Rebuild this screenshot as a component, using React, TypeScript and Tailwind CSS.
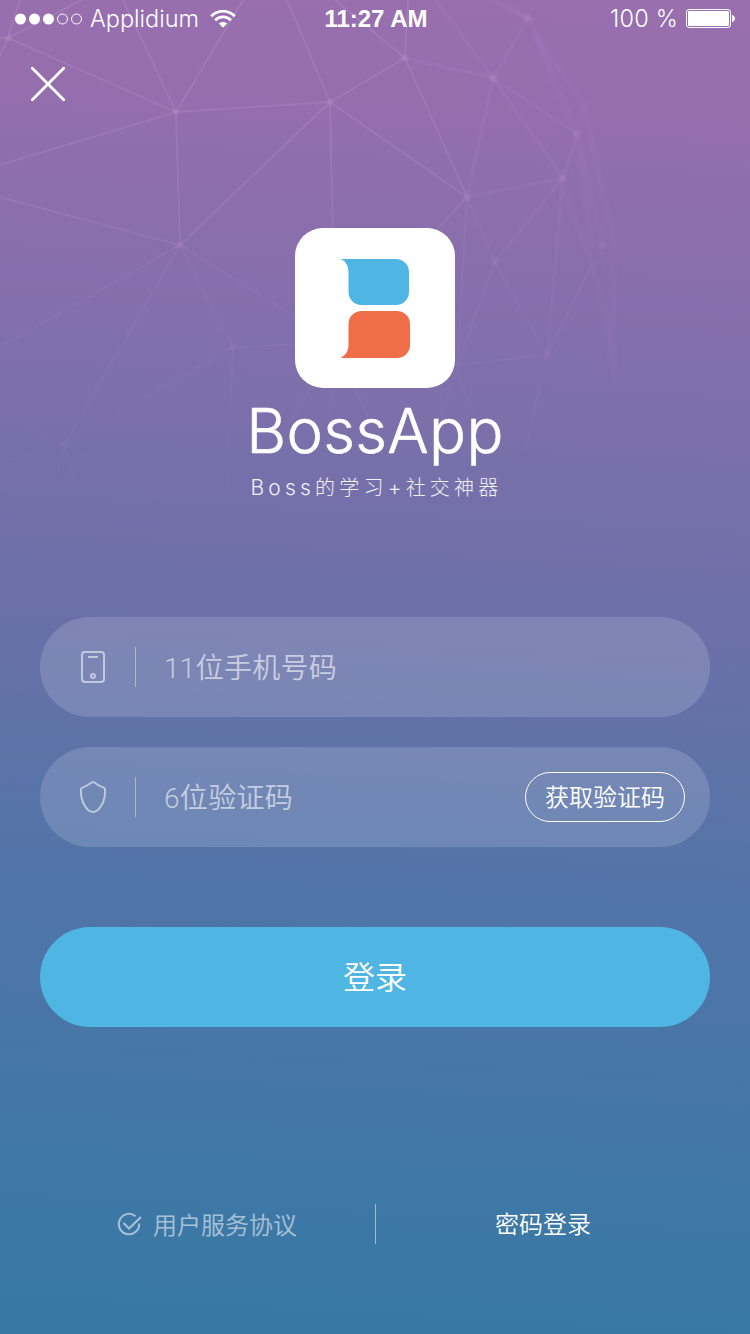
import type { ReactNode } from "react";

const nodes: [number, number][] = [
  [8, 38], [176, 112], [330, 102], [405, 58], [493, 78], [180, 245], [233, 347], [467, 197],
  [563, 178], [495, 262], [547, 355], [64, 445], [577, 134], [528, 18], [602, 246],
];

const sharpLines: [number, number, number, number][] = [
  [8, 38, 176, 112], [8, 38, 82, 0], [8, 38, 20, 0], [8, 38, 0, 56], [8, 38, 0, 38],
  [176, 112, 123, 0], [176, 112, 243, 0], [176, 112, 330, 102], [176, 112, 0, 165], [176, 112, 180, 245],
  [330, 102, 287, 0], [330, 102, 405, 58], [330, 102, 180, 245], [330, 102, 333, 240], [330, 102, 467, 197],
  [405, 58, 408, 0], [405, 58, 335, 0], [405, 58, 467, 197], [467, 197, 430, 237],
  [0, 197, 180, 245],
];

const faintLines: [number, number, number, number][] = [
  [180, 245, 0, 347], [180, 245, 64, 445], [180, 245, 233, 347], [180, 245, 310, 326],
  [233, 347, 310, 344], [233, 347, 64, 445], [233, 347, 227, 490], [64, 445, 0, 411], [64, 445, 0, 462],
  [64, 445, 50, 500], [64, 445, 80, 500], [64, 445, 150, 485], [467, 197, 457, 370], [467, 197, 495, 262],
  [495, 262, 457, 365], [495, 262, 547, 355], [457, 365, 547, 355], [547, 355, 525, 450],
  [310, 388, 250, 490], [333, 388, 325, 480], [355, 388, 390, 470], [457, 370, 435, 430], [457, 370, 475, 420],
];

const softLines: [number, number, number, number][] = [
  [405, 58, 493, 78], [493, 78, 436, 0], [493, 78, 528, 18], [493, 78, 467, 197], [493, 78, 563, 178],
  [493, 78, 577, 134], [467, 197, 563, 178], [563, 178, 577, 134], [563, 178, 495, 262],
  [563, 178, 547, 355], [528, 18, 490, 0], [547, 355, 594, 262],
];

const hazeLines: [number, number, number, number][] = [
  [505, 0, 530, 20], [530, 20, 555, 85], [535, 35, 584, 104], [555, 85, 575, 130], [584, 104, 577, 134],
  [584, 104, 602, 190], [577, 134, 592, 246], [580, 145, 604, 246], [602, 190, 616, 250],
  [563, 190, 592, 265], [592, 265, 604, 310], [604, 310, 613, 365], [613, 250, 613, 390],
];

function Lines({ items }: { items: [number, number, number, number][] }) {
  return (
    <>
      {items.map(([x1, y1, x2, y2], i) => (
        <line key={i} x1={x1} y1={y1} x2={x2} y2={y2} />
      ))}
    </>
  );
}

function Mesh() {
  return (
    <svg className="pointer-events-none absolute top-0 left-0" width="750" height="520" viewBox="0 0 750 520" fill="none">
      <defs>
        <filter id="soft" x="-10%" y="-10%" width="120%" height="120%">
          <feGaussianBlur stdDeviation="1" />
        </filter>
        <filter id="haze" x="-30%" y="-10%" width="160%" height="120%">
          <feGaussianBlur stdDeviation="2.2" />
        </filter>
        <linearGradient id="fade" x1="0" y1="0" x2="0" y2="520" gradientUnits="userSpaceOnUse">
          <stop offset="0" stopColor="#fff" />
          <stop offset="0.4" stopColor="#fff" stopOpacity="0.8" />
          <stop offset="0.7" stopColor="#fff" stopOpacity="0.45" />
          <stop offset="0.95" stopColor="#fff" stopOpacity="0.15" />
        </linearGradient>
        <mask id="meshMask" maskUnits="userSpaceOnUse" x="0" y="0" width="750" height="520">
          <rect width="750" height="520" fill="url(#fade)" />
        </mask>
      </defs>
      <g mask="url(#meshMask)">
        <g stroke="#cda0d6" strokeOpacity="0.23" strokeWidth="1.8"><Lines items={sharpLines} /></g>
        <g stroke="#ae90d0" strokeOpacity="0.26" strokeWidth="1.6"><Lines items={faintLines} /></g>
        <g stroke="#b488cc" strokeOpacity="0.28" strokeWidth="2.4" filter="url(#soft)"><Lines items={softLines} /></g>
        <g stroke="#a980c8" strokeOpacity="0.2" strokeWidth="5.5" filter="url(#haze)"><Lines items={hazeLines} /></g>
        <g fill="#c096cc" fillOpacity="0.24" filter="url(#soft)">
          {nodes.map(([cx, cy], i) => <circle key={i} cx={cx} cy={cy} r="3.6" />)}
        </g>
      </g>
    </svg>
  );
}

function StatusBar() {
  return (
    <div className="relative grid h-[37px] grid-cols-[1fr_106px_1fr] items-center pr-[15px] pl-[15px] font-['Liberation_Sans',sans-serif] text-2xl leading-9 text-white">
      <div className="flex h-9 items-center">
        <svg width="68" height="12" viewBox="0 0 68 12" fill="#fff">
          <circle cx="5.500" cy="6" r="5.500" />
          <circle cx="19.500" cy="6" r="5.500" />
          <circle cx="33.500" cy="6" r="5.500" />
          <circle cx="47.500" cy="6" r="5" fill="none" stroke="#fff" />
          <circle cx="61.500" cy="6" r="5" fill="none" stroke="#fff" />
        </svg>
        <span className="ml-[7px] w-[108px] font-['Inter','Liberation_Sans',sans-serif] text-[23.5px] font-light whitespace-nowrap">Applidium</span>
        <svg className="ml-3" width="26" height="18" viewBox="0 0 26 18" fill="none" stroke="#fff" strokeWidth="2.7">
          <path d="M1.2 6.2C8 -.5 18 -.5 24.800 6.200" />
          <path d="M5.100 10.200C9.700 5.800 16.300 5.800 20.900 10.200" />
          <path d="M13 17.800 8.800 13.600C11.200 11.400 14.800 11.400 17.200 13.600Z" fill="#fff" stroke="none" />
        </svg>
      </div>
      <span className="pl-0.5 text-center text-2xl leading-9 font-bold whitespace-nowrap">11:27 AM</span>
      <div className="flex h-9 items-center justify-end">
        <span className="font-['Inter','Liberation_Sans',sans-serif] text-[23.5px] font-light tracking-[0.2px] whitespace-nowrap">100 %</span>
        <svg className="ml-2" width="49" height="19" viewBox="0 0 49 19">
          <rect x=".5" y=".5" width="44" height="18" rx="2.5" fill="none" stroke="#fff" />
          <rect x="2" y="2" width="41" height="15" rx="1" fill="#fff" />
          <path d="M46 6C50 7 50 12 46 13Z" fill="#fff" />
        </svg>
      </div>
    </div>
  );
}

function Logo() {
  return (
    <div className="h-40 w-40 rounded-[28px] bg-white">
      <svg width="160" height="160" viewBox="0 0 160 160">
        <path d="M45.500 31H101A13 13 0 0 1 114 44V64A13 13 0 0 1 101 77H66.500A13 13 0 0 1 53.500 64V45C53.500 38 51 33 45.500 31Z" fill="#4fb6e3" />
        <path d="M45.500 130H102A13 13 0 0 0 115 117V96A13 13 0 0 0 102 83H66.500A13 13 0 0 0 53.500 96V116C53.500 123 51 127 45.500 130Z" fill="#ef6d48" />
      </svg>
    </div>
  );
}

function Field({ icon, label, children }: { icon: ReactNode; label: string; children?: ReactNode }) {
  return (
    <div className="flex h-[100px] items-center rounded-full bg-white/15 pr-[25px] pl-[37px]">
      {icon}
      <div className="ml-[26px] h-10 w-px bg-white/40" />
      <span className="ml-7 flex-1 pt-1 font-['Roboto','Noto_Sans_CJK_SC',sans-serif] text-[28px] leading-10 font-[350] tracking-[0.3px] text-white/60">{label}</span>
      {children}
    </div>
  );
}

export default function App() {
  return (
    <main className="relative flex h-[1334px] w-[750px] flex-col overflow-hidden bg-[linear-gradient(183deg,#996fae_0%,#966eae_8%,#7870aa_35%,#6a70a8_47%,#5574a8_63%,#3e78a6_88%,#3878a4_100%)] font-['Noto_Sans_CJK_SC',sans-serif] text-white">
      <Mesh />
      <StatusBar />
      <button aria-label="Close" className="relative mt-[29px] ml-[30px] h-9 w-9">
        <svg width="36" height="36" viewBox="0 0 36 36" stroke="#fff" strokeWidth="2.8" strokeLinecap="round">
          <path d="M2.300 2.300 33.700 33.700M33.700 2.300 2.300 33.700" />
        </svg>
      </button>

      <header className="relative mt-[126px] flex flex-col items-center">
        <Logo />
        <h1 className="mt-[7px] h-[72px] font-['Inter','Liberation_Sans',sans-serif] text-[61.5px] leading-[72px] font-light tracking-[0.3px] whitespace-nowrap [-webkit-text-stroke:0.6px_white]">BossApp</h1>
        <p className="mt-1.5 flex h-[30px] items-center pl-[3px] font-['Inter','Noto_Sans_CJK_SC',sans-serif] text-[20px] leading-[30px] font-light tracking-[4.2px] whitespace-nowrap text-white/90">
          <span className="text-[21px]">Boss</span>
          <span>的学习</span>
          <span className="text-[21px]">+</span>
          <span>社交神器</span>
        </p>
      </header>

      <form className="relative mt-[114px] flex flex-col px-10">
        <Field
          label="11位手机号码"
          icon={
            <svg width="32" height="36" viewBox="0 0 32 36" fill="none" stroke="#fff" strokeOpacity=".55" strokeWidth="2">
              <rect x="5" y="3" width="22" height="30" rx="3" />
              <path d="M11 8h10" />
              <circle cx="16" cy="27" r="2" />
            </svg>
          }
        />
        <div className="mt-[30px]">
          <Field
            label="6位验证码"
            icon={
              <svg width="32" height="36" viewBox="0 0 32 36" fill="none" stroke="#fff" strokeOpacity=".55" strokeWidth="2" strokeLinejoin="round">
                <path d="M15 3.300Q16 2.700 17 3.300C20 5.500 23.500 7.600 27 8.900Q28 9.300 28 10.500C28.500 18 26 25.500 21.500 30.500Q16 35.500 10.500 30.500C6 25.500 3.500 18 4 10.500Q4 9.300 5 8.900C8.500 7.600 12 5.500 15 3.300Z" />
              </svg>
            }
          >
            <button type="button" className="h-[50px] w-40 rounded-full border border-white pb-0.5 text-2xl font-[350] whitespace-nowrap">获取验证码</button>
          </Field>
        </div>
        <button type="button" className="mt-20 h-[100px] rounded-full bg-[#4fb5e2] pb-1 text-[32px] font-[350]">登录</button>
      </form>

      <footer className="relative mt-[177px] grid h-10 grid-cols-[375px_1px_1fr] items-center text-2xl leading-[38px] font-[350]">
        <div className="flex items-center pl-[117px] text-white/55">
          <svg width="25" height="24" viewBox="0 0 25 24" fill="none" stroke="currentColor" strokeWidth="2">
            <path d="M18.500 4.200A10.200 10.200 0 1 0 22.200 11.500" />
            <path d="M6.500 11 12 16.500 24 5" />
          </svg>
          <span className="ml-[11px] whitespace-nowrap">用户服务协议</span>
        </div>
        <div className="h-10 bg-white/50" />
        <span className="pb-0.5 pl-[119px] whitespace-nowrap">密码登录</span>
      </footer>
    </main>
  );
}
